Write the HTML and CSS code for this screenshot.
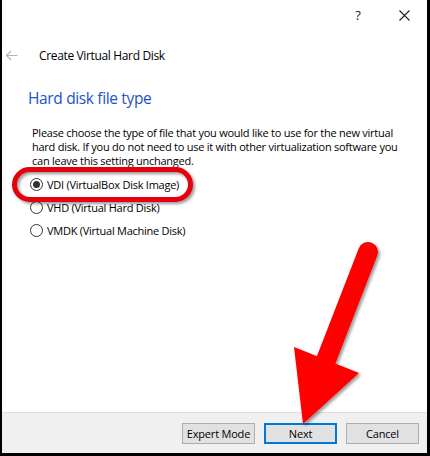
FILE: index.html
```html
<!DOCTYPE html>
<html lang="en">
<head>
    <meta charset="UTF-8">
    <meta name="viewport" content="width=device-width, initial-scale=1.0">
    <title>Create Virtual Hard Disk</title>
    <link rel="stylesheet" href="styles.css">
</head>
<body>
    <div class="window">
        <div class="titlebar">
            <span class="title-btn help">?</span>
            <span class="title-btn close">
                <svg width="11" height="11" viewBox="0 0 11 11">
                    <path d="M0.5 0.5 L10.5 10.5 M10.5 0.5 L0.5 10.5" stroke="#222" stroke-width="1.1" fill="none"/>
                </svg>
            </span>
        </div>

        <div class="header">
            <span class="back">
                <svg width="13" height="11" viewBox="0 0 13 11">
                    <path d="M12.5 5.5 H1.5 M6 1 L1.5 5.5 L6 10" stroke="#b4b4b4" stroke-width="1.2" fill="none"/>
                </svg>
            </span>
            <span class="wizard-title">Create Virtual Hard Disk</span>
        </div>

        <div class="content">
            <h1 class="page-heading">Hard disk file type</h1>
            <p class="intro">
                Please choose the type of file that you would like to use for the new virtual<br>
                hard disk. If you do not need to use it with other virtualization software you<br>
                can leave this setting unchanged.
            </p>

            <div class="options">
                <label class="option">
                    <span class="radio checked"></span>
                    VDI (VirtualBox Disk Image)
                </label>
                <label class="option">
                    <span class="radio"></span>
                    VHD (Virtual Hard Disk)
                </label>
                <label class="option">
                    <span class="radio"></span>
                    VMDK (Virtual Machine Disk)
                </label>
            </div>
        </div>

        <div class="footer">
            <button class="btn">Expert Mode</button>
            <button class="btn default">Next</button>
            <button class="btn">Cancel</button>
        </div>

        <!-- annotation drawn over the dialog -->
        <svg class="markup" width="430" height="456" viewBox="0 0 430 456">
            <defs>
                <filter id="shade" x="-20%" y="-20%" width="140%" height="140%">
                    <feGaussianBlur in="SourceAlpha" stdDeviation="1.6"/>
                    <feOffset dx="2" dy="2" result="blur"/>
                    <feComponentTransfer><feFuncA type="linear" slope="0.4"/></feComponentTransfer>
                    <feMerge><feMergeNode/><feMergeNode in="SourceGraphic"/></feMerge>
                </filter>
            </defs>
            <rect x="14.5" y="169.5" width="176" height="30" rx="15" fill="none" stroke="#e4000f" stroke-width="5" filter="url(#shade)"/>
            <g filter="url(#shade)" fill="#ff0000">
                <path d="M368 252 L323 368" stroke="#ff0000" stroke-width="20" stroke-linecap="round"/>
                <polygon points="294,347 359,373 303,424"/>
            </g>
        </svg>
    </div>
</body>
</html>
```

FILE: styles.css
```css
body {
    margin: 0;
    font-family: "Open Sans", "Noto Sans", sans-serif;
    font-size: 11px;
    letter-spacing: -0.25px;
    color: #000;
}

.window {
    position: relative;
    width: 430px;
    height: 456px;
    box-sizing: border-box;
    background: #fff;
    border-left: 2px solid #000;
    border-right: 3px solid #000;
    border-bottom: 3px solid #000;
    display: flex;
    flex-direction: column;
    overflow: hidden;
}

.titlebar {
    height: 30px;
    display: flex;
    justify-content: flex-end;
}

.title-btn {
    width: 46px;
    height: 30px;
    display: flex;
    align-items: center;
    justify-content: center;
}

.help {
    font-size: 13px;
    color: #222;
}

.header {
    height: 50px;
    display: flex;
    align-items: center;
}

.back {
    width: 37px;
    display: flex;
    justify-content: center;
    margin-left: -9px;
    margin-right: 9px;
}

.wizard-title {
    font-size: 12px;
    letter-spacing: -0.35px;
}

.content {
    padding-left: 26px;
}

.page-heading {
    margin: 8px 0 0;
    font-size: 15.5px;
    font-weight: normal;
    letter-spacing: -0.35px;
    line-height: 20px;
    color: #1d52c8;
}

.intro {
    margin: 18px 0 0 4px;
    line-height: 14px;
}

.options {
    margin: 5px 0 0 4px;
}

.option {
    height: 23px;
    display: flex;
    align-items: center;
    gap: 4px;
}

.radio {
    width: 11px;
    height: 11px;
    border: 1px solid #333;
    border-radius: 50%;
    position: relative;
    margin-left: -2px;
}

.radio.checked::after {
    content: "";
    position: absolute;
    left: 2px;
    top: 2px;
    width: 7px;
    height: 7px;
    border-radius: 50%;
    background: #333;
}

.footer {
    margin-top: auto;
    height: 40px;
    background: #f0f0f0;
    border-top: 1px solid #dfdfdf;
    display: flex;
    justify-content: flex-end;
    align-items: center;
    gap: 9px;
    padding-right: 8px;
}

.btn {
    width: 73px;
    height: 21px;
    font-family: inherit;
    font-size: 11px;
    letter-spacing: -0.2px;
    background: #e1e1e1;
    border: 1px solid #adadad;
    padding: 0;
    color: #000;
}

.btn.default {
    border: 2px solid #0078d7;
}

.markup {
    position: absolute;
    left: -2px;
    top: 0;
    pointer-events: none;
}
```
